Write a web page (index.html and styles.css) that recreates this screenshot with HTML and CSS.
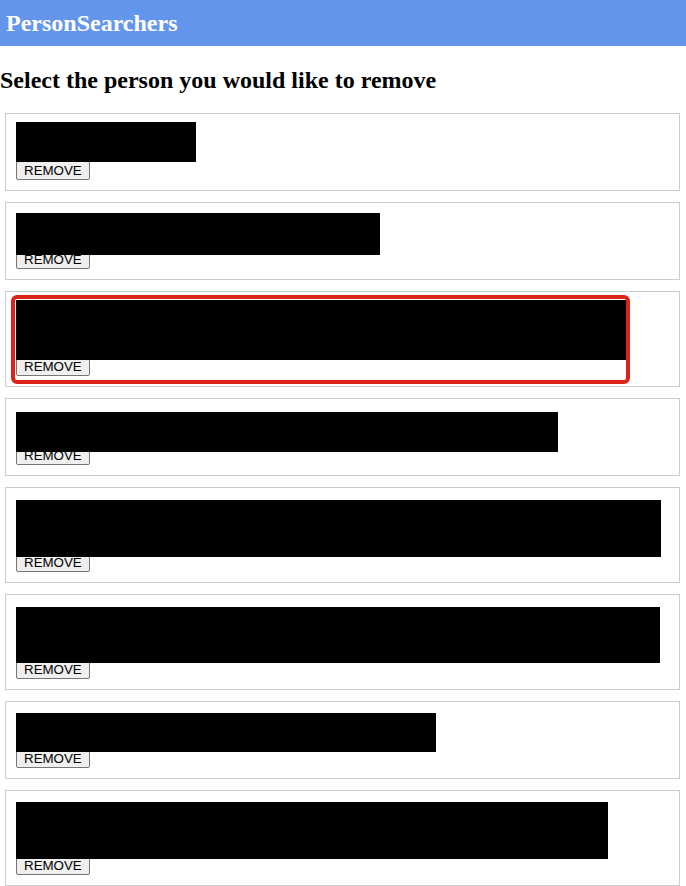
FILE: index.html
```html
<!DOCTYPE html>
<html lang="en">
<head>
<meta charset="utf-8">
<title>PersonSearchers</title>
<link rel="stylesheet" href="styles.css">
</head>
<body>
<header class="topbar">
  <h1 class="brand">PersonSearchers</h1>
</header>
<main class="page">
  <h2 class="prompt">Select the person you would like to remove</h2>
  <ul class="people">
    <li class="person">
      <div class="name"><span class="redact" style="top:0;width:180px;height:40px"></span></div>
      <button class="remove" type="button">REMOVE</button>
    </li>
    <li class="person">
      <div class="name"><span class="redact" style="top:2px;width:364px;height:42px"></span></div>
      <button class="remove" type="button">REMOVE</button>
    </li>
    <li class="person person--tall person--marked">
      <div class="name"><span class="redact" style="top:0;width:612px;height:60px"></span></div>
      <button class="remove" type="button">REMOVE</button>
      <span class="highlight"></span>
    </li>
    <li class="person">
      <div class="name"><span class="redact" style="top:5px;width:542px;height:40px"></span></div>
      <button class="remove" type="button">REMOVE</button>
    </li>
    <li class="person person--tall">
      <div class="name"><span class="redact" style="top:4px;width:645px;height:57px"></span></div>
      <button class="remove" type="button">REMOVE</button>
    </li>
    <li class="person person--tall">
      <div class="name"><span class="redact" style="top:4px;width:644px;height:56px"></span></div>
      <button class="remove" type="button">REMOVE</button>
    </li>
    <li class="person">
      <div class="name"><span class="redact" style="top:3px;width:420px;height:39px"></span></div>
      <button class="remove" type="button">REMOVE</button>
    </li>
    <li class="person person--tall">
      <div class="name"><span class="redact" style="top:3px;width:592px;height:57px"></span></div>
      <button class="remove" type="button">REMOVE</button>
    </li>
  </ul>
</main>
</body>
</html>
```
FILE: styles.css
```css
html, body {
  margin: 0;
  padding: 0;
  background: #ffffff;
}

body {
  font-family: "Liberation Serif", "Times New Roman", serif;
  color: #000000;
  overflow: hidden;
}

.topbar {
  background: #6495ed;
  height: 46px;
  padding-left: 6px;
}

.brand {
  margin: 0;
  font-size: 24px;
  font-weight: bold;
  line-height: 46px;
  color: #ffffff;
}

.page {
  padding-left: 5px;
}

.prompt {
  margin: 20px 0 19px -5px;
  font-size: 24px;
  font-weight: bold;
  line-height: 28px;
}

.people {
  list-style: none;
  margin: 0;
  padding: 0;
  width: 675px;
  display: flex;
  flex-direction: column;
  gap: 11px;
}

.person {
  position: relative;
  border: 1px solid #cccccc;
  padding: 8px 10px 10px 10px;
}

.name {
  position: relative;
  height: 39px;
}

.person--tall .name {
  height: 57px;
}

.redact {
  position: absolute;
  left: 0;
  background: #000000;
  z-index: 1;
}

.remove {
  display: block;
  box-sizing: border-box;
  height: 19px;
  margin: 0;
  padding: 0 7px;
  font-family: "Liberation Sans", Arial, sans-serif;
  font-size: 13.33px;
  line-height: 17px;
  color: #000000;
  background: #efefef;
  border: 1px solid #767676;
  border-radius: 2px;
}

.highlight {
  position: absolute;
  left: 5px;
  top: 3px;
  width: 619px;
  height: 89px;
  box-sizing: border-box;
  border: 4px solid #da2418;
  border-radius: 6px;
  z-index: 2;
  pointer-events: none;
}
```
